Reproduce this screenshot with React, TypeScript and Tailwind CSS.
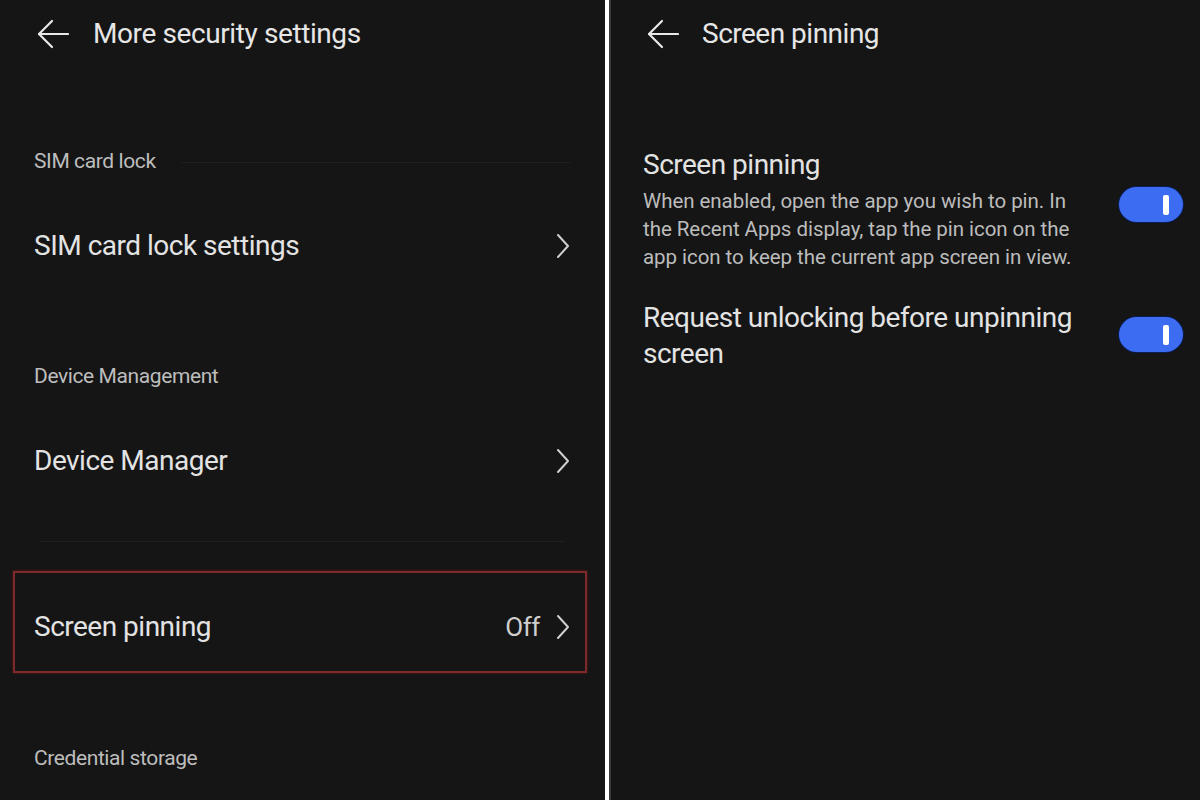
import React from "react";

const BackArrow = () => (
  <svg width="32" height="30" viewBox="0 0 32 30" fill="none" stroke="#e8e8e8" strokeWidth="2.2" strokeLinecap="round" strokeLinejoin="round">
    <path d="M2 15 H31" />
    <path d="M15 2 L2 15 L15 28" />
  </svg>
);

const Chevron = () => (
  <svg width="14" height="26" viewBox="0 0 14 26" fill="none" stroke="#cfcfcf" strokeWidth="2" strokeLinecap="round" strokeLinejoin="round">
    <path d="M2 2 L12 13 L2 24" />
  </svg>
);

const Toggle = ({ className }: { className: string }) => (
  <div className={"w-[64px] h-[35px] rounded-full bg-[#3b6cf2] flex items-center justify-end pr-[14px] shrink-0 shadow-[0_0_0_1px_#0b1d52] " + className}>
    <div className="w-[6px] h-[20px] rounded-[2px] bg-white" />
  </div>
);

export default function App() {
  const font = { fontFamily: "Roboto, 'Noto Sans', sans-serif" };
  return (
    <div className="w-[1200px] h-[800px] bg-[#151515] flex overflow-hidden" style={font}>
      {/* Left panel */}
      <div className="w-[605px] h-full flex flex-col">
        <div className="h-[68px] flex items-center pl-[37px]">
          <BackArrow />
          <div className="ml-[24px] text-[28px] text-[#e6e6e6] tracking-[-0.4px]">More security settings</div>
        </div>

        <div className="mt-[74px] h-[40px] flex items-center pl-[34px] pr-[35px]">
          <span className="text-[21px] text-[#bdbdbd] tracking-[-0.4px]">SIM card lock</span>
          <div className="flex-1 ml-[26px] h-px bg-[#1f1f1f]" />
        </div>

        <div className="mt-[34px] h-[60px] flex items-center justify-between pl-[34px] pr-[35px]">
          <span className="text-[28px] text-[#e3e3e3] tracking-[-0.5px]">SIM card lock settings</span>
          <Chevron />
        </div>

        <div className="mt-[81px] h-[40px] flex items-center pl-[34px]">
          <span className="text-[21px] text-[#bdbdbd] tracking-[-0.4px]">Device Management</span>
        </div>

        <div className="mt-[34px] h-[60px] flex items-center justify-between pl-[34px] pr-[35px]">
          <span className="text-[28px] text-[#e3e3e3] tracking-[-0.5px]">Device Manager</span>
          <Chevron />
        </div>

        <div className="mt-[50px] mx-[40px] h-px bg-[#202020]" />

        <div className="mt-[29px] ml-[13px] mr-[18px] h-[102px] border-2 border-[#7e2a2a] shadow-[0_0_3px_#5a1515] flex items-center justify-between pl-[19px] pr-[15px] pt-[10px]">
          <span className="text-[28px] text-[#e3e3e3] tracking-[-0.5px]">Screen pinning</span>
          <div className="flex items-center gap-[16px]">
            <span className="text-[26px] text-[#cfcfcf] tracking-[-0.4px]">Off</span>
            <Chevron />
          </div>
        </div>

        <div className="mt-[66px] h-[40px] flex items-center pl-[34px]">
          <span className="text-[21px] text-[#bdbdbd] tracking-[-0.4px]">Credential storage</span>
        </div>
      </div>

      {/* Divider */}
      <div className="w-[4px] h-full bg-white" />
      <div className="w-[2px] h-full bg-[#3a3a3a]" />

      {/* Right panel */}
      <div className="flex-1 h-full flex flex-col">
        <div className="h-[68px] flex items-center pl-[36px]">
          <BackArrow />
          <div className="ml-[23px] text-[28px] text-[#e6e6e6] tracking-[-0.5px]">Screen pinning</div>
        </div>

        <div className="mt-[79px] flex items-start pl-[32px] pr-[17px]">
          <div className="w-[436px]">
            <div className="text-[28px] leading-[36px] text-[#e3e3e3] tracking-[-0.5px]">Screen pinning</div>
            <div className="mt-[4px] text-[20.5px] leading-[28px] text-[#bcbcbc] tracking-[-0.05px]">
              When enabled, open the app you wish to pin. In the Recent Apps display, tap the pin icon on the app icon to keep the current app screen in view.
            </div>
          </div>
          <div className="flex-1" />
          <Toggle className="mt-[40px]" />
        </div>

        <div className="mt-[29px] flex items-start pl-[32px] pr-[17px]">
          <div className="w-[440px] text-[28px] leading-[36px] text-[#e3e3e3] tracking-[-0.5px]">
            Request unlocking before unpinning screen
          </div>
          <div className="flex-1" />
          <Toggle className="mt-[17px]" />
        </div>
      </div>
    </div>
  );
}
